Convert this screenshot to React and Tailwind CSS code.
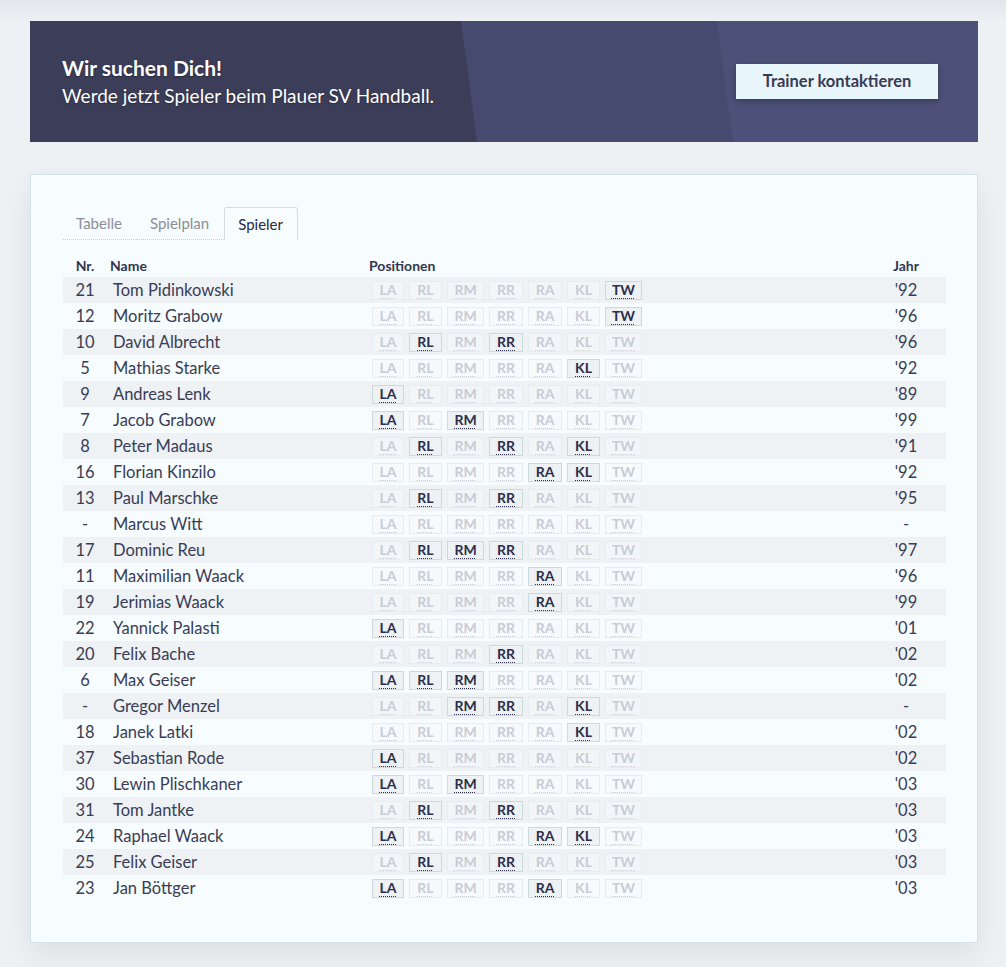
import React from "react";

const POS = [
  ["LA", "w-[32px]"],
  ["RL", "w-[33px]"],
  ["RM", "w-[37px]"],
  ["RR", "w-[34px]"],
  ["RA", "w-[34px]"],
  ["KL", "w-[33px]"],
  ["TW", "w-[37px]"],
];

const players = [
  ["21", "Tom Pidinkowski", ["TW"], "'92"],
  ["12", "Moritz Grabow", ["TW"], "'96"],
  ["10", "David Albrecht", ["RL", "RR"], "'96"],
  ["5", "Mathias Starke", ["KL"], "'92"],
  ["9", "Andreas Lenk", ["LA"], "'89"],
  ["7", "Jacob Grabow", ["LA", "RM"], "'99"],
  ["8", "Peter Madaus", ["RL", "RR", "KL"], "'91"],
  ["16", "Florian Kinzilo", ["RA", "KL"], "'92"],
  ["13", "Paul Marschke", ["RL", "RR"], "'95"],
  ["-", "Marcus Witt", [], "-"],
  ["17", "Dominic Reu", ["RL", "RM", "RR"], "'97"],
  ["11", "Maximilian Waack", ["RA"], "'96"],
  ["19", "Jerimias Waack", ["RA"], "'99"],
  ["22", "Yannick Palasti", ["LA"], "'01"],
  ["20", "Felix Bache", ["RR"], "'02"],
  ["6", "Max Geiser", ["LA", "RL", "RM"], "'02"],
  ["-", "Gregor Menzel", ["RM", "RR", "KL"], "-"],
  ["18", "Janek Latki", ["KL"], "'02"],
  ["37", "Sebastian Rode", ["LA"], "'02"],
  ["30", "Lewin Plischkaner", ["LA", "RM"], "'03"],
  ["31", "Tom Jantke", ["RL", "RR"], "'03"],
  ["24", "Raphael Waack", ["LA", "RA", "KL"], "'03"],
  ["25", "Felix Geiser", ["RL", "RR"], "'03"],
  ["23", "Jan Böttger", ["LA", "RA"], "'03"],
];

function Badge({ label, width, active }) {
  return active ? (
    <span
      className={
        "inline-flex h-[19px] items-center justify-center border border-[#c9dbdc] bg-[#eef2f4] text-[14px] font-bold leading-none text-[#2c2e4b] " +
        width
      }
    >
      <span className="underline decoration-dotted decoration-1 underline-offset-[3px]">{label}</span>
    </span>
  ) : (
    <span
      className={
        "inline-flex h-[19px] items-center justify-center border border-[#e5edef] bg-[#f6f9fa]/60 text-[14px] font-bold leading-none text-[#c9ccd5] " +
        width
      }
    >
      <span className="underline decoration-dotted decoration-1 underline-offset-[3px]">{label}</span>
    </span>
  );
}

export default function App() {
  return (
    <div
      className="min-h-[967px] w-full bg-[#edf1f4] text-[#3a3c55]"
      style={{ fontFamily: "Lato, 'Open Sans', sans-serif" }}
    >
      <div className="h-[21px] bg-gradient-to-b from-[#e3e7eb] to-[#edf1f4]" />
      <div className="px-[30px]">
        {/* Banner */}
        <div className="relative h-[121px] w-[948px] overflow-hidden bg-[#4d5179]">
          <div className="absolute inset-0 bg-[#474a6f] [clip-path:polygon(0_0,687px_0,703px_100%,0_100%)]" />
          <div className="absolute inset-0 bg-[#3c3d58] [clip-path:polygon(0_0,431px_0,447px_100%,0_100%)]" />
          <div className="relative flex h-full items-center justify-between pl-[32px] pr-[40px]">
            <div className="text-white [text-shadow:0_1px_2px_rgba(0,0,0,0.35)]">
              <div className="text-[21px] font-bold leading-[26px]">Wir suchen Dich!</div>
              <div className="mt-[2px] text-[19px] leading-[25px]">Werde jetzt Spieler beim Plauer SV Handball.</div>
            </div>
            <button className="h-[35px] w-[202px] bg-[#e8f5fb] text-[16.5px] font-bold text-[#383a55] shadow-[0_2px_6px_rgba(0,0,0,0.3)]">
              Trainer kontaktieren
            </button>
          </div>
        </div>

        {/* Card */}
        <div className="mt-[32px] w-[948px] border border-[#d2e2e7] bg-[#f7fcfe] pb-[41px] pl-[32px] pr-[31px] pt-[32px] shadow-[0_12px_30px_rgba(0,0,0,0.07)]">
          {/* Tabs */}
          <div className="flex h-[33px] items-end">
            <div className="flex h-[33px] items-center border-b border-dotted border-[#c9cfd4] pl-[13px] pr-[14px] text-[15px] text-[#8b8e99]">
              Tabelle
            </div>
            <div className="flex h-[33px] items-center border-b border-dotted border-[#c9cfd4] pl-[14px] pr-[15px] text-[15px] text-[#8b8e99]">
              Spielplan
            </div>
            <div className="flex h-[33px] items-center rounded-t-[3px] border border-b-0 border-[#d3dde2] bg-[#f7fcfe] pl-[13px] pr-[14px] text-[15px] text-[#26283f]">
              Spieler
            </div>
          </div>

          {/* Header */}
          <div className="mt-[15px] flex h-[20px] items-center text-[14px] font-bold text-[#33354f]">
            <div className="w-[44px] text-center">Nr.</div>
            <div className="w-[262px] pl-[3px]">Name</div>
            <div className="flex-1">Positionen</div>
            <div className="w-[80px] text-center">Jahr</div>
          </div>

          {/* Rows */}
          <div className="mt-[2px]">
            {players.map(([nr, name, pos, year], i) => (
              <div
                key={i}
                className={
                  "flex h-[26px] items-center text-[16.5px] " +
                  (i % 2 === 0 ? "bg-[#eef2f5]" : "")
                }
              >
                <div className="w-[44px] text-center">{nr}</div>
                <div className="w-[265px] pl-[6px]">{name}</div>
                <div className="flex flex-1 gap-[5px]">
                  {POS.map(([p, w]) => (
                    <Badge key={p} label={p} width={w} active={pos.includes(p)} />
                  ))}
                </div>
                <div className="w-[80px] text-center">{year}</div>
              </div>
            ))}
          </div>
        </div>
      </div>
    </div>
  );
}
